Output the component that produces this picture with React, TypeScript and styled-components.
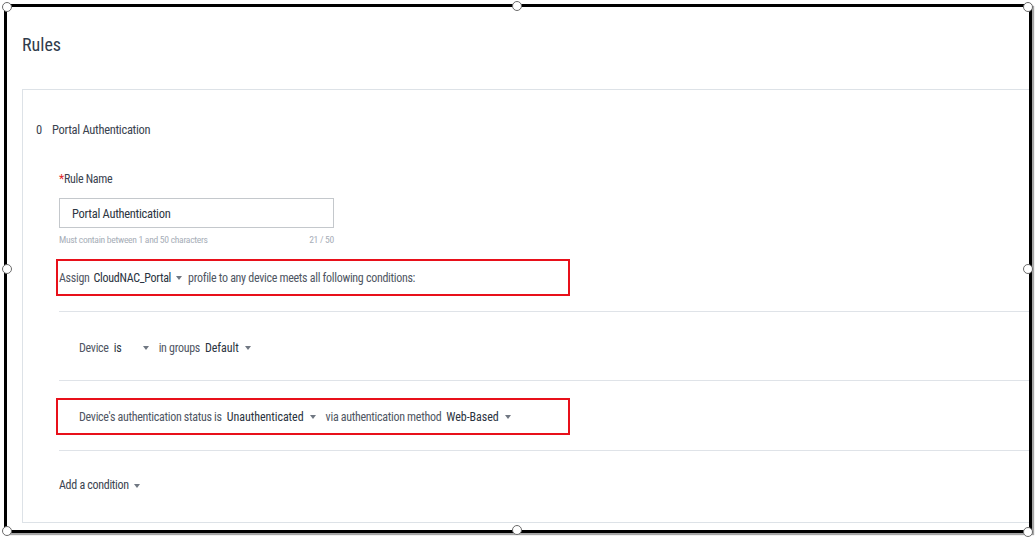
import React from "react";
import styled, { createGlobalStyle } from "styled-components";

const GlobalStyle = createGlobalStyle`
  html, body { margin: 0; padding: 0; background: #ffffff; }
  body {
    font-family: "Roboto Condensed", "Arial Narrow", "Liberation Sans Narrow", Roboto, sans-serif;
    color: #3b4350;
  }
  * { box-sizing: border-box; }
`;

const Stage = styled.div`
  position: relative;
  width: 1035px;
  height: 539px;
  padding: 4px 0 0 4px;
`;

const Frame = styled.div`
  width: 1028px;
  height: 529px;
  border: 3px solid #000;
  box-shadow: 2px 2px 1px rgba(0, 0, 0, 0.35);
  overflow: hidden;
  background: #fff;
  padding-left: 15px;
`;

const Handle = styled.span<{ $x: number; $y: number }>`
  position: absolute;
  left: ${(p) => p.$x - 5}px;
  top: ${(p) => p.$y - 5}px;
  width: 10px;
  height: 10px;
  border-radius: 50%;
  background: #fff;
  border: 1.5px solid #6b6b6b;
`;

const Title = styled.h1`
  margin: 28px 0 0 0;
  font-size: 18px;
  line-height: 20px;
  font-weight: 400;
  color: #2f3b4b;
`;

const Card = styled.section`
  margin-top: 34px;
  width: 1100px;
  height: 434px;
  border: 1px solid #dde2e7;
  display: flex;
  flex-direction: column;
`;

const RuleHeading = styled.div`
  display: flex;
  gap: 10px;
  padding: 32px 0 0 13px;
  font-size: 12.5px;
  letter-spacing: -0.3px;
  line-height: 16px;
  color: #3b4350;
`;

const Body = styled.div`
  padding-left: 36px;
  display: flex;
  flex-direction: column;
`;

const Label = styled.label`
  margin-top: 33px;
  font-size: 12px;
  letter-spacing: -0.3px;
  line-height: 16px;
  color: #3b4350;
  & > b {
    color: #e0262b;
    font-weight: 400;
  }
`;

const Input = styled.div`
  margin-top: 11px;
  width: 275px;
  height: 30px;
  border: 1px solid #c4c8cc;
  padding-left: 12px;
  display: flex;
  align-items: center;
  font-size: 12.5px;
  letter-spacing: -0.3px;
  color: #2e3642;
`;

const Helper = styled.div`
  margin-top: 6px;
  width: 275px;
  display: flex;
  justify-content: space-between;
  font-size: 9.6px;
  letter-spacing: -0.3px;
  line-height: 12px;
  color: #a7aeb8;
`;

const Line = styled.div<{ $pad?: number; $loose?: boolean }>`
  display: flex;
  align-items: center;
  gap: ${(p) => (p.$loose ? 5 : 4)}px;
  white-space: nowrap;
  font-size: 12px;
  letter-spacing: -0.3px;
  line-height: 16px;
  color: #4f5663;
  padding-left: ${(p) => p.$pad ?? 0}px;
`;

const Marked = styled(Line)<{ $top: number }>`
  margin-top: ${(p) => p.$top}px;
  margin-left: -3px;
  width: 514px;
  height: 37px;
  border: 2px solid #e8101a;
`;

const Value = styled.span<{ $min?: number; $loose?: boolean }>`
  display: inline-flex;
  align-items: center;
  gap: ${(p) => (p.$loose ? 6 : 5)}px;
  color: #2a3340;
  margin-right: ${(p) => (p.$loose ? 5 : 2)}px;
  & > em {
    font-style: normal;
    letter-spacing: ${(p) => (p.$loose ? "-0.05px" : "-0.3px")};
    min-width: ${(p) => p.$min ?? 0}px;
  }
`;

const Caret = styled.i`
  display: inline-block;
  width: 0;
  height: 0;
  border-left: 3.5px solid transparent;
  border-right: 3.5px solid transparent;
  border-top: 4px solid #707782;
  margin-top: 1px;
`;

const Divider = styled.hr<{ $top: number }>`
  margin: ${(p) => p.$top}px 0 0 0;
  border: none;
  border-top: 1px solid #dfe3e8;
  height: 0;
`;

const ConditionRow = styled.div<{ $h: number; $shift?: number }>`
  height: ${(p) => p.$h}px;
  padding-top: ${(p) => p.$shift ?? 0}px;
  display: flex;
  align-items: center;
`;

const Select: React.FC<{ value: string; min?: number; loose?: boolean }> = ({
  value,
  min,
  loose,
}) => (
  <Value $min={min} $loose={loose}>
    <em>{value}</em>
    <Caret />
  </Value>
);

export default function App() {
  const handles: [number, number][] = [
    [7, 7],
    [517, 6],
    [1028, 7],
    [7, 269],
    [1028, 269],
    [7, 531],
    [517, 530],
    [1028, 532],
  ];
  return (
    <>
      <GlobalStyle />
      <Stage>
        <Frame>
          <Title>Rules</Title>
          <Card>
            <RuleHeading>
              <span>0</span>
              <span>Portal Authentication</span>
            </RuleHeading>
            <Body>
              <Label>
                <b>*</b>Rule Name
              </Label>
              <Input>Portal Authentication</Input>
              <Helper>
                <span>Must contain between 1 and 50 characters</span>
                <span>21 / 50</span>
              </Helper>
              <Marked $top={13} $pad={1}>
                Assign <Select value="CloudNAC_Portal" /> profile to any device meets all following
                conditions:
              </Marked>
              <Divider $top={15} />
              <ConditionRow $h={68} $shift={3}>
                <Line $pad={20} $loose>
                  Device <Select value="is" min={23} loose /> in groups{" "}
                  <Select value="Default" loose />
                </Line>
              </ConditionRow>
              <Divider $top={0} />
              <Marked $top={17} $pad={21} $loose>
                Device's authentication status is <Select value="Unauthenticated" loose /> via
                authentication method <Select value="Web-Based" loose />
              </Marked>
              <Divider $top={15} />
              <ConditionRow $h={68}>
                <Line>
                  <Value>
                    <em style={{ color: "#3b4350" }}>Add a condition</em>
                    <Caret />
                  </Value>
                </Line>
              </ConditionRow>
            </Body>
          </Card>
        </Frame>
        {handles.map(([x, y], i) => (
          <Handle key={i} $x={x} $y={y} />
        ))}
      </Stage>
    </>
  );
}
